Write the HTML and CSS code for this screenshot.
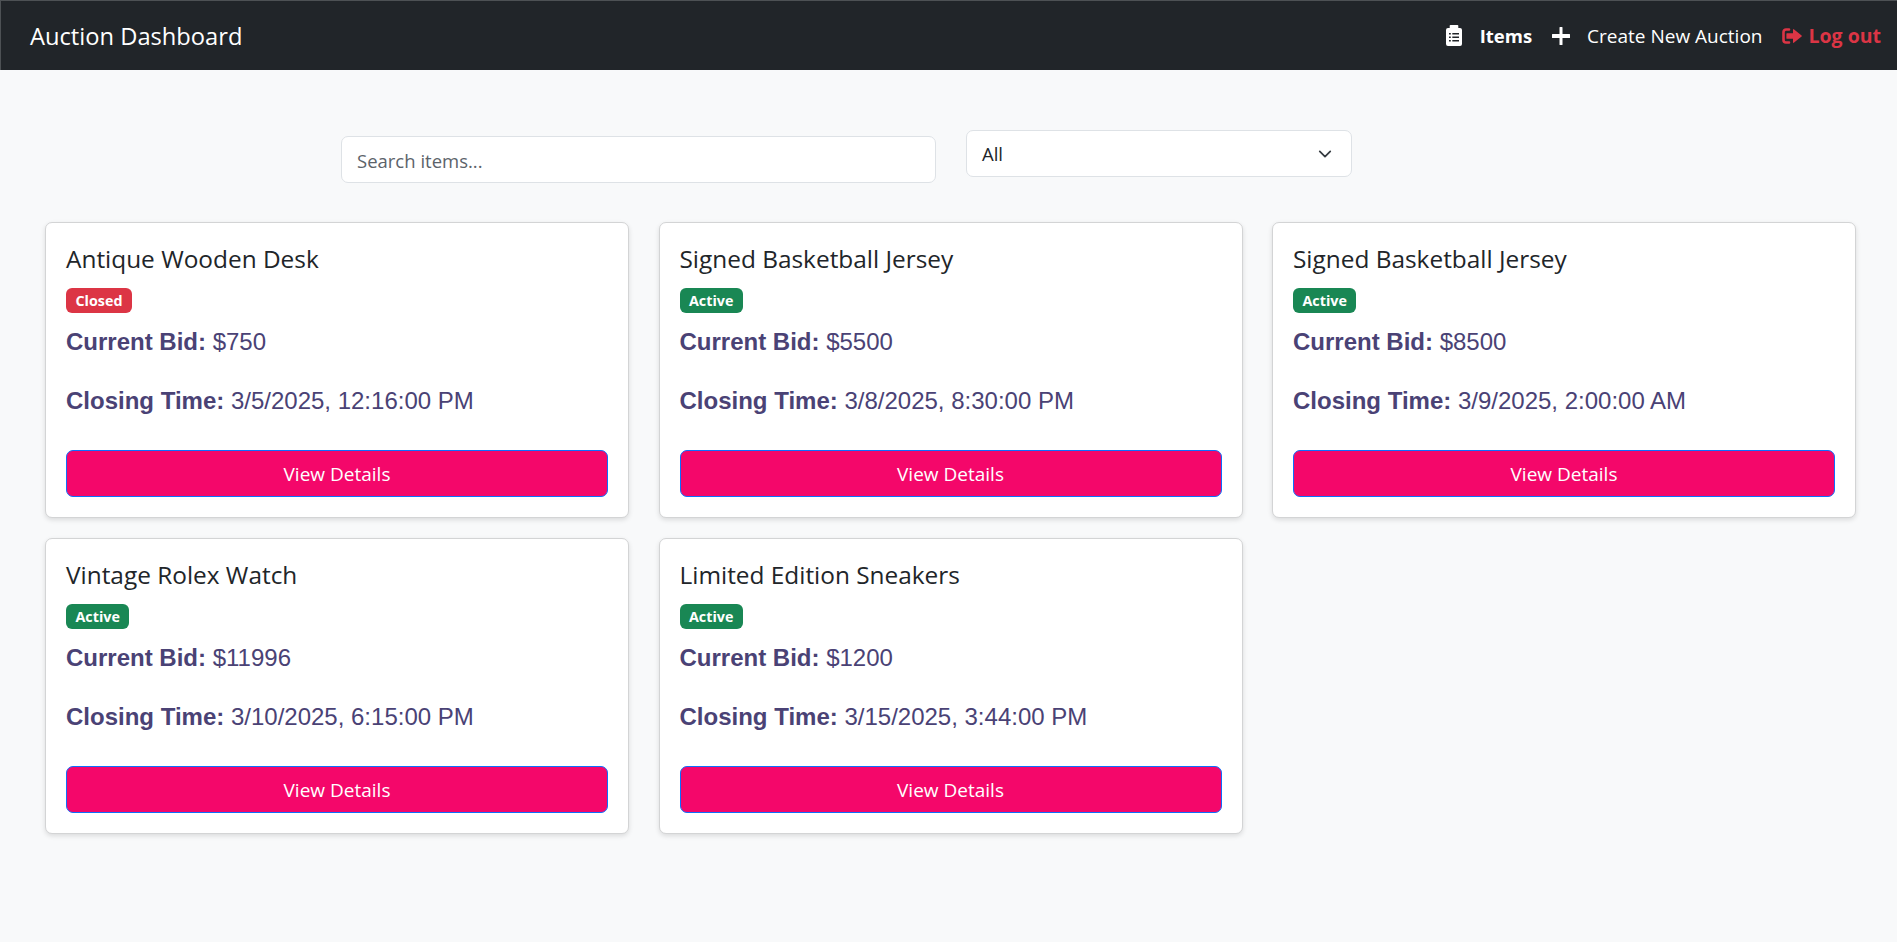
FILE: index.html
```html
<!DOCTYPE html>
<html lang="en">
<head>
    <meta charset="UTF-8">
    <title>Auction Dashboard</title>
    <link rel="stylesheet" href="styles.css">
</head>
<body>
    <nav class="navbar">
        <span class="brand">Auction Dashboard</span>
        <div class="nav-links">
            <a class="nav-link nav-items">
                <svg class="icon-clipboard" viewBox="0 0 16 21" fill="currentColor"><path fill-rule="evenodd" d="M4.500 0h7a.8.8 0 0 1 .8.8V3H14a2 2 0 0 1 2 2v14a2 2 0 0 1-2 2H2a2 2 0 0 1-2-2V5a2 2 0 0 1 2-2h1.700V.8a.8.8 0 0 1 .8-.8zM3 8v1.500h1.800V8zm3.300 0v1.500H13V8zM3 11.500V13h1.800v-1.500zm3.300 0V13H13v-1.500zM3 15v1.500h1.800V15zm3.300 0v1.500H13V15z"/></svg>
                <span class="items-label">Items</span>
            </a>
            <a class="nav-link nav-create">
                <svg class="icon-plus" viewBox="0 0 18 18" fill="currentColor"><path d="M7.500.5a.5.5 0 0 1 .5-.5h2a.5.5 0 0 1 .5.5V7h7a.5.5 0 0 1 .5.5v3a.5.5 0 0 1-.5.5h-7v6.500a.5.5 0 0 1-.5.5H8a.5.5 0 0 1-.5-.5V11H.5a.5.5 0 0 1-.5-.5v-3A.5.5 0 0 1 .5 7h7z"/></svg>
                Create New Auction
            </a>
            <a class="nav-link nav-logout">
                <svg class="icon-logout" viewBox="0 0 20 16"><path d="M7 1.500H4A2.500 2.500 0 0 0 1.500 4v8A2.500 2.500 0 0 0 4 14.500h3" fill="none" stroke="currentColor" stroke-width="2.600" stroke-linecap="round"/><path d="M5 5.200h6V1.600a.5.5 0 0 1 .8-.4l7.800 6.400a.5.5 0 0 1 0 .8l-7.800 6.400a.5.5 0 0 1-.8-.4v-3.600H5a.6.6 0 0 1-.6-.6V5.800a.6.6 0 0 1 .6-.6z" fill="currentColor"/></svg>
                Log out
            </a>
        </div>
    </nav>

    <main class="content">
        <div class="filters">
            <input class="search-input" type="text" placeholder="Search items...">
            <div class="status-select">
                <span>All</span>
                <svg class="icon-chevron" viewBox="0 0 16 16" fill="none" stroke="currentColor" stroke-width="2" stroke-linecap="round" stroke-linejoin="round"><path d="M2 5l6 6 6-6"/></svg>
            </div>
        </div>

        <div class="card-grid">
            <div class="card">
                <h5 class="card-title">Antique Wooden Desk</h5>
                <span class="badge badge-closed">Closed</span>
                <p class="card-line"><strong>Current Bid:</strong> $750</p>
                <p class="card-line"><strong>Closing Time:</strong> 3/5/2025, 12:16:00 PM</p>
                <button class="details-btn">View Details</button>
            </div>
            <div class="card">
                <h5 class="card-title">Signed Basketball Jersey</h5>
                <span class="badge badge-active">Active</span>
                <p class="card-line"><strong>Current Bid:</strong> $5500</p>
                <p class="card-line"><strong>Closing Time:</strong> 3/8/2025, 8:30:00 PM</p>
                <button class="details-btn">View Details</button>
            </div>
            <div class="card">
                <h5 class="card-title">Signed Basketball Jersey</h5>
                <span class="badge badge-active">Active</span>
                <p class="card-line"><strong>Current Bid:</strong> $8500</p>
                <p class="card-line"><strong>Closing Time:</strong> 3/9/2025, 2:00:00 AM</p>
                <button class="details-btn">View Details</button>
            </div>
            <div class="card">
                <h5 class="card-title">Vintage Rolex Watch</h5>
                <span class="badge badge-active">Active</span>
                <p class="card-line"><strong>Current Bid:</strong> $11996</p>
                <p class="card-line"><strong>Closing Time:</strong> 3/10/2025, 6:15:00 PM</p>
                <button class="details-btn">View Details</button>
            </div>
            <div class="card">
                <h5 class="card-title">Limited Edition Sneakers</h5>
                <span class="badge badge-active">Active</span>
                <p class="card-line"><strong>Current Bid:</strong> $1200</p>
                <p class="card-line"><strong>Closing Time:</strong> 3/15/2025, 3:44:00 PM</p>
                <button class="details-btn">View Details</button>
            </div>
        </div>
    </main>
</body>
</html>
```

FILE: styles.css
```css
* {
    box-sizing: border-box;
}
body {
    margin: 0;
    min-height: 942px;
    background: #f8f9fa;
    color: #212529;
    font-family: "Open Sans", "Noto Sans", sans-serif;
}
.navbar {
    height: 70px;
    padding: 0 16px 0 29px;
    display: flex;
    align-items: center;
    justify-content: space-between;
    background: #212529;
    border-top: 1px solid #4d5154;
    border-left: 1px solid #4d5154;
    color: white;
}
.brand {
    font-size: 23.700px;
}
.nav-links {
    display: flex;
    align-items: center;
    gap: 20px;
    font-size: 19px;
}
.nav-link {
    display: flex;
    align-items: center;
}
.nav-items {
    font-weight: 700;
    gap: 18px;
}
.items-label {
    font-size: 18.500px;
}
.nav-create {
    gap: 17px;
}
.nav-logout {
    color: #dc3545;
    font-size: 19.500px;
    font-weight: 700;
    gap: 6px;
}
.icon-clipboard {
    width: 16px;
    height: 21px;
}
.icon-plus {
    width: 18px;
    height: 18px;
}
.icon-logout {
    width: 20px;
    height: 16px;
}
.content {
    padding: 60px 40px 0 45px;
}
.filters {
    display: flex;
    align-items: flex-start;
    gap: 30px;
    margin-left: 296px;
}
.search-input {
    width: 595px;
    height: 47px;
    margin-top: 6px;
    padding: 1px 15px 0;
    background: white;
    border: 1px solid #dee2e6;
    border-radius: 7px;
    font-family: inherit;
    font-size: 18.500px;
}
.search-input::placeholder {
    color: #5c636a;
}
.status-select {
    width: 386px;
    height: 47px;
    padding: 0 19px 0 15px;
    display: flex;
    align-items: center;
    justify-content: space-between;
    background: white;
    border: 1px solid #dee2e6;
    border-radius: 7px;
    font-size: 18.500px;
}
.icon-chevron {
    width: 14px;
    height: 14px;
    color: #343a40;
}
.card-grid {
    margin-top: 39px;
    display: grid;
    grid-template-columns: repeat(3, 584px);
    column-gap: 29.500px;
    row-gap: 20px;
}
.card {
    height: 296px;
    padding: 20px;
    background: white;
    border: 1px solid #d3d4d5;
    border-radius: 7px;
    box-shadow: 0 2px 5px rgba(0, 0, 0, 0.12);
}
.card-title {
    margin: 1px 0 15px;
    font-size: 24.400px;
    font-weight: 500;
    line-height: 29px;
}
.badge {
    display: inline-block;
    padding: 4px 9.500px;
    border-radius: 6px;
    color: white;
    font-size: 14.300px;
    font-weight: 700;
    line-height: 17px;
}
.badge-closed {
    background: #dc3545;
}
.badge-active {
    background: #198754;
}
.card-line {
    margin: 15px 0 0;
    height: 44px;
    color: #4a4275;
    font-family: "Liberation Sans", Arial, sans-serif;
    font-size: 24px;
    line-height: 28px;
}
.details-btn {
    display: block;
    width: 100%;
    height: 47px;
    margin-top: 19px;
    background: #f4076a;
    border: 1px solid #0d6efd;
    border-radius: 7px;
    color: white;
    font-family: inherit;
    font-size: 19px;
}
```
